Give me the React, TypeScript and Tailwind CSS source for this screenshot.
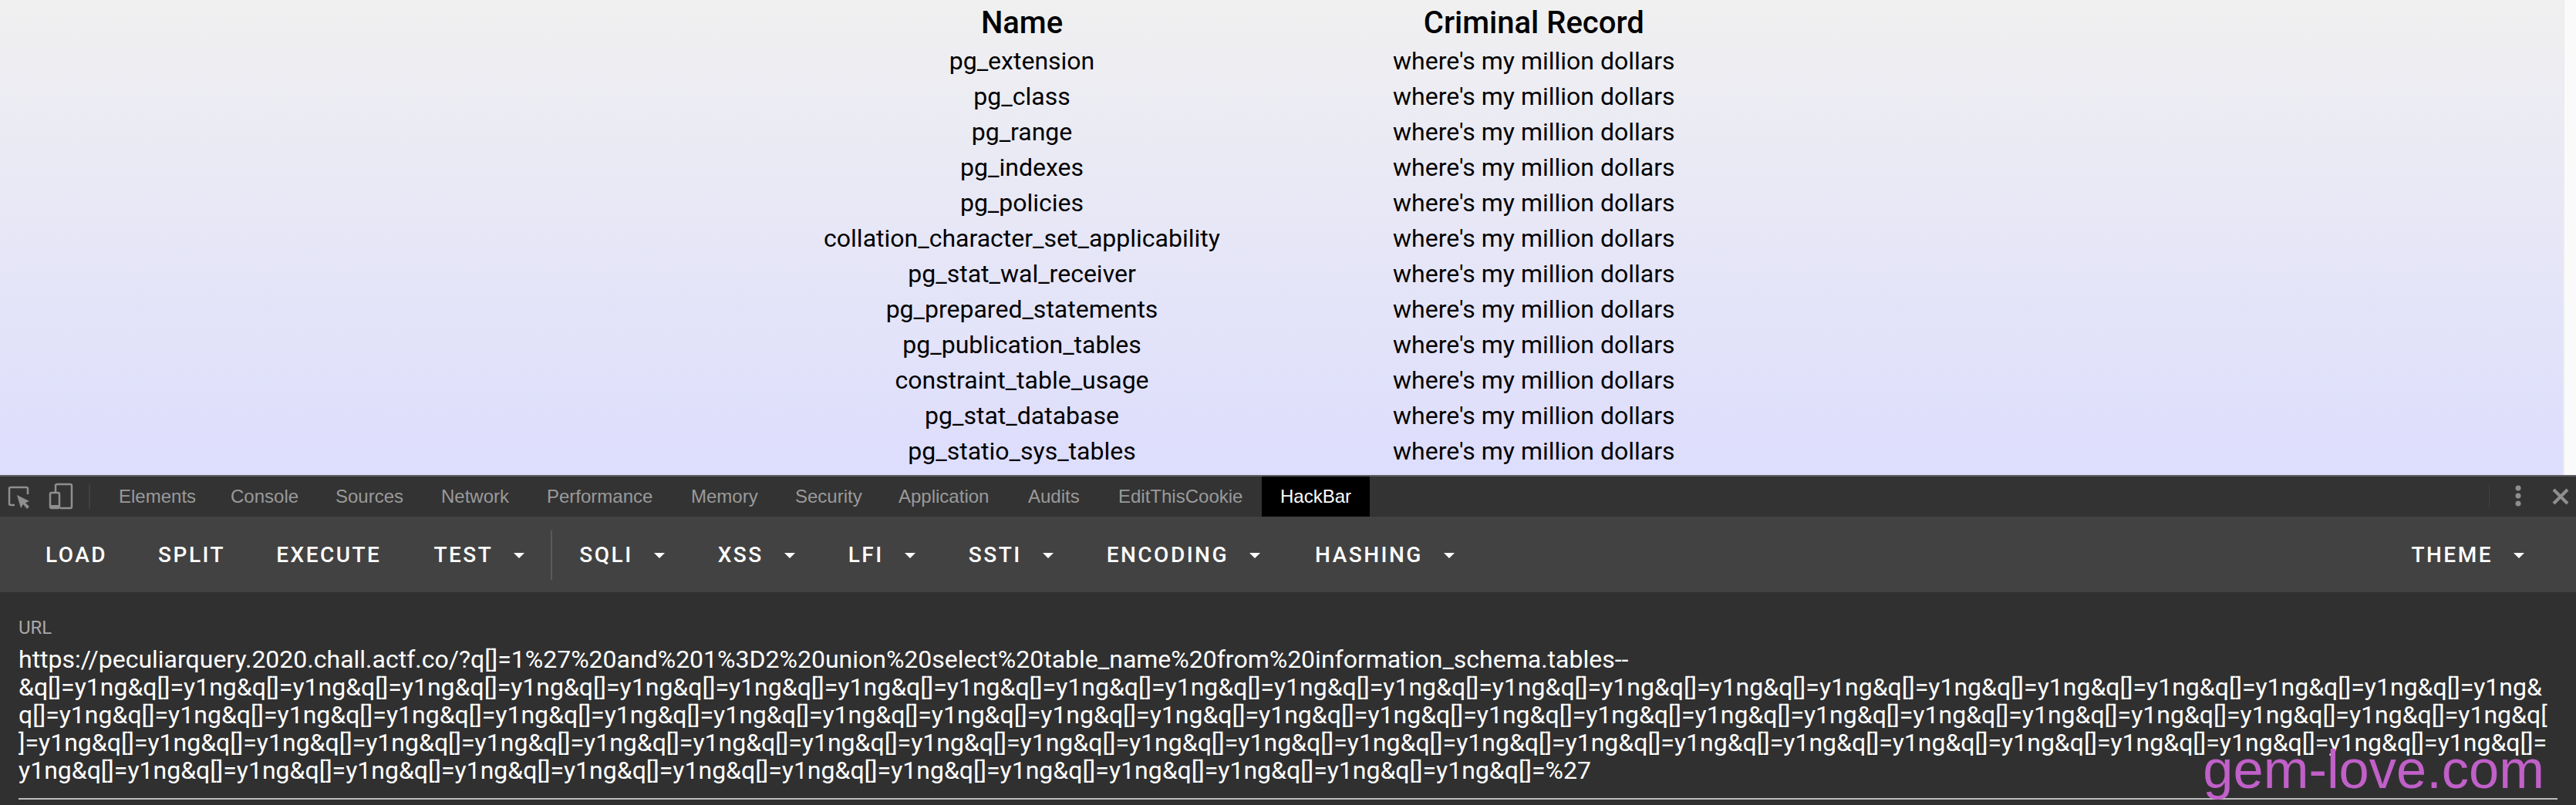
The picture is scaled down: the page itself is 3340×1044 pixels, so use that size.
const names = [
  "pg_extension",
  "pg_class",
  "pg_range",
  "pg_indexes",
  "pg_policies",
  "collation_character_set_applicability",
  "pg_stat_wal_receiver",
  "pg_prepared_statements",
  "pg_publication_tables",
  "constraint_table_usage",
  "pg_stat_database",
  "pg_statio_sys_tables",
];

const tabs = [
  { label: "Elements", width: "w-[145px]" },
  { label: "Console", width: "w-[136px]" },
  { label: "Sources", width: "w-[137px]" },
  { label: "Network", width: "w-[137px]" },
  { label: "Performance", width: "w-[187px]" },
  { label: "Memory", width: "w-[135px]" },
  { label: "Security", width: "w-[134px]" },
  { label: "Application", width: "w-[168px]" },
  { label: "Audits", width: "w-[117px]" },
  { label: "EditThisCookie", width: "w-[210px]" },
];

const unit = "&q[]=y1ng";

const urlLines = [
  "https://peculiarquery.2020.chall.actf.co/?q[]=1%27%20and%201%3D2%20union%20select%20table_name%20from%20information_schema.tables--",
  unit.repeat(23) + "&",
  "q[]=y1ng" + unit.repeat(22) + "&q[",
  "]=y1ng" + unit.repeat(22) + "&q[]=",
  "y1ng" + unit.repeat(13) + "&q[]=%27",
];

function Caret() {
  return <span className="ml-[27px] mr-[3px] inline-block h-0 w-0 border-x-[7px] border-t-[7px] border-x-transparent border-t-white" />;
}

function ToolButton({ label, menu }: { label: string; menu?: boolean }) {
  return (
    <button className="mr-[2px] flex h-[72px] items-center px-[32px] text-[28px] font-medium tracking-[2.5px] text-white">
      {label}
      {menu && <Caret />}
    </button>
  );
}

export default function App() {
  return (
    <div className="relative flex h-screen flex-col overflow-hidden font-['Roboto',sans-serif]">
      <div className="flex h-[616px] shrink-0 overflow-hidden">
        <div className="flex-1 overflow-hidden bg-linear-to-b from-[#f0f0f0] to-[#ddddfd] pl-[1066px] text-black">
          <table className="border-collapse text-center text-[32px] leading-[46px]">
            <thead>
              <tr className="h-[56px]">
                <th className="w-[518px] p-0 pt-[3px] text-[40px] font-medium">Name</th>
                <th className="w-[800px] p-0 pt-[3px] pl-[222px] pr-[358px] text-[40px] font-medium whitespace-nowrap">Criminal Record</th>
              </tr>
            </thead>
            <tbody>
              {names.map((name) => (
                <tr key={name} className="h-[46px]">
                  <td className="p-0">{name}</td>
                  <td className="p-0 pl-[222px] pr-[358px] whitespace-nowrap">where's my million dollars</td>
                </tr>
              ))}
            </tbody>
          </table>
        </div>
        <div className="w-[17px] border-l-2 border-[#ececec] bg-[#fafafa]" />
      </div>

      <div className="flex h-[54px] shrink-0 items-stretch border-t-2 border-[#5f5f61] bg-[#333333] font-['Liberation_Sans',sans-serif] text-[24px] text-[#9a9a9a]">
        <div className="flex w-[130px] items-center">
          <svg width="130" height="52" viewBox="0 0 130 52" fill="none">
            <path d="M19 37h-5a2 2 0 0 1-2-2V16a2 2 0 0 1 2-2h20a2 2 0 0 1 2 2v7" stroke="#8f8f8f" strokeWidth="2.5" />
            <path d="M22 24L38 32L33 34L38 39L35 42L30 36L27 41Z" fill="#8f8f8f" />
            <path d="M72 20V12a2 2 0 0 1 2-2h17a2 2 0 0 1 2 2v27a2 2 0 0 1-2 2H78" stroke="#8f8f8f" strokeWidth="2.5" />
            <rect x="65" y="21" width="12" height="20" rx="2" stroke="#8f8f8f" strokeWidth="2.5" />
            <path d="M65 39h12" stroke="#8f8f8f" strokeWidth="4" />
            <path d="M116 10v32" stroke="#3f3f3f" strokeWidth="2" />
          </svg>
        </div>
        {tabs.map((tab) => (
          <div key={tab.label} className={`flex items-center pl-[24px] ${tab.width}`}>{tab.label}</div>
        ))}
        <div className="flex w-[140px] items-center bg-black pl-[24px] text-white">HackBar</div>
        <div className="flex-1" />
        <div className="flex w-[113px] items-center">
          <svg width="113" height="52" viewBox="0 0 113 52" fill="none">
            <path d="M0 10v32" stroke="#3f3f3f" strokeWidth="2" />
            <circle cx="38" cy="15" r="3.5" fill="#8f8f8f" />
            <circle cx="38" cy="25" r="3.5" fill="#8f8f8f" />
            <circle cx="38" cy="35" r="3.5" fill="#8f8f8f" />
            <path d="M84 17l18 18M102 17L84 35" stroke="#8f8f8f" strokeWidth="4" />
          </svg>
        </div>
      </div>

      <div className="flex h-[98px] shrink-0 items-center bg-[#424242] pt-[2px] pl-[27px] pr-[30px]">
        <ToolButton label="LOAD" />
        <ToolButton label="SPLIT" />
        <ToolButton label="EXECUTE" />
        <div className="w-[2px]" />
        <ToolButton label="TEST" menu />
        <div className="-ml-[3px] mr-[3px] h-[64px] w-[2px] bg-[#5a5a5a]" />
        <ToolButton label="SQLI" menu />
        <ToolButton label="XSS" menu />
        <ToolButton label="LFI" menu />
        <ToolButton label="SSTI" menu />
        <ToolButton label="ENCODING" menu />
        <div className="w-[2px]" />
        <ToolButton label="HASHING" menu />
        <div className="flex-1" />
        <ToolButton label="THEME" menu />
      </div>

      <div className="flex-1 bg-[#303030] px-[24px] pt-[32px]">
        <div className="text-[24px] leading-[28px] text-[#a8a8a8]">URL</div>
        <div className="mt-[9px] border-b-2 border-[#bdbdbd] pb-[18px] text-[32px] leading-[36px] whitespace-nowrap text-white">
          {urlLines.map((line, i) => (
            <div key={i}>{line}</div>
          ))}
        </div>
      </div>

      <div className="absolute right-[41px] bottom-[6px] font-['Liberation_Sans',sans-serif] text-[70.5px] leading-[80px] text-[#c060c8]">gem-love.com</div>
    </div>
  );
}
